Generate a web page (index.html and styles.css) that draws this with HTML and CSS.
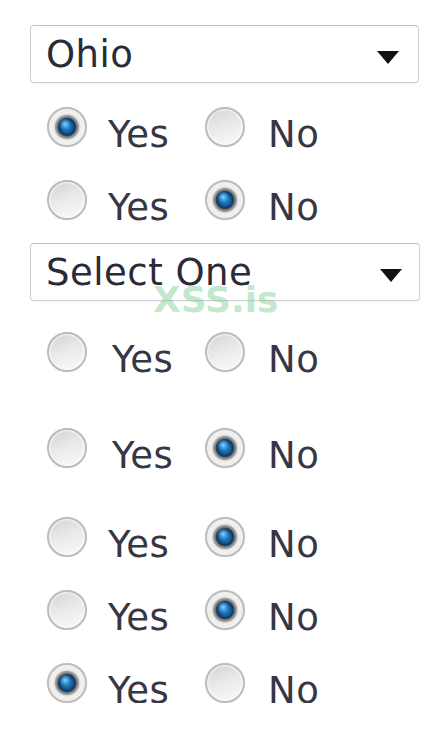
FILE: index.html
```html
<!DOCTYPE html>
<html>
<head>
<meta charset="utf-8">
<link rel="stylesheet" href="styles.css">
</head>
<body>
<div class="form">
  <div class="select"><span class="value">Ohio</span><span class="arrow"></span></div>
  <div class="row m1"><span class="radio on"></span><span class="lbl yes">Yes</span><span class="radio"></span><span class="lbl no">No</span></div>
  <div class="row m2"><span class="radio"></span><span class="lbl yes">Yes</span><span class="radio on"></span><span class="lbl no">No</span></div>
  <div class="select s2"><span class="value">Select One</span><span class="arrow"></span></div>
  <div class="row m3"><span class="radio"></span><span class="lbl yes wide">Yes</span><span class="radio"></span><span class="lbl no">No</span></div>
  <div class="row m4"><span class="radio"></span><span class="lbl yes wide">Yes</span><span class="radio on"></span><span class="lbl no">No</span></div>
  <div class="row m5"><span class="radio"></span><span class="lbl yes">Yes</span><span class="radio on"></span><span class="lbl no">No</span></div>
  <div class="row m6"><span class="radio"></span><span class="lbl yes">Yes</span><span class="radio on"></span><span class="lbl no">No</span></div>
  <div class="row m6"><span class="radio on"></span><span class="lbl yes">Yes</span><span class="radio"></span><span class="lbl no">No</span></div>
  <div class="watermark">XSS.is</div>
</div>
</body>
</html>
```
FILE: styles.css
```css
html, body {
  margin: 0;
  padding: 0;
  background: #ffffff;
}
body {
  font-family: "DejaVu Sans", Verdana, sans-serif;
  font-size: 37px;
  letter-spacing: 0.5px;
  color: #2a2a38;
}
.form {
  position: relative;
  padding: 25px 0 0 30px;
  width: 390px;
}
.select {
  box-sizing: border-box;
  width: 389px;
  height: 58px;
  border: 1px solid #cdd1d6;
  border-top-color: #bcc0c6;
  border-radius: 4px;
  box-shadow: 0 1px 1px rgba(0, 0, 0, 0.04);
  display: flex;
  align-items: center;
  justify-content: space-between;
  padding: 0 19px 0 15px;
  line-height: 37px;
}
.s2 {
  width: 390px;
  margin-top: 23px;
  padding-right: 17px;
}
.value {
  display: block;
}
.arrow {
  width: 0;
  height: 0;
  border-left: 11px solid transparent;
  border-right: 11px solid transparent;
  border-top: 13px solid #111111;
  margin-top: 6px;
}
.row {
  display: flex;
  align-items: baseline;
  height: 40px;
  padding-left: 17px;
  line-height: 37px;
  color: #363644;
}
.m1 { margin-top: 24px; }
.m2 { margin-top: 33px; }
.m3 { margin-top: 31px; }
.m4 { margin-top: 56px; }
.m5 { margin-top: 49px; }
.m6 { margin-top: 33px; }
.radio {
  display: inline-block;
  flex: none;
  box-sizing: border-box;
  width: 40px;
  height: 40px;
  border-radius: 50%;
  border: 2px solid #bdbdbd;
  background: linear-gradient(160deg, #d2d2d2 0%, #e9e9e9 45%, #fbfbfb 100%);
  box-shadow: inset 0 0 2px 1px rgba(255, 255, 255, 0.9), 0 0 1px rgba(0, 0, 0, 0.15);
}
.radio.on {
  background:
    radial-gradient(circle at 45% 42%, rgba(150, 215, 255, 0.95) 0, rgba(90, 180, 240, 0.6) 3px, rgba(90, 180, 240, 0) 6px),
    radial-gradient(circle at 50% 50%, #2486cc 0, #1866a6 5px, #0b3a66 8px, #3e4c58 9px, #858585 10px, #9c9c9c 11.5px, #d8d8d8 12.5px, #f2f2f2 14px, #ededed 16px, #dcdcdc 18px);
}
.lbl {
  display: inline-block;
  box-sizing: border-box;
}
.yes {
  width: 118px;
  padding-left: 21px;
}
.yes.wide {
  padding-left: 25px;
}
.no {
  padding-left: 23px;
}
.watermark {
  position: absolute;
  left: 153px;
  top: 282px;
  font-weight: bold;
  font-size: 36px;
  line-height: 36px;
  letter-spacing: 0;
  color: rgba(120, 205, 140, 0.45);
  pointer-events: none;
}
```
